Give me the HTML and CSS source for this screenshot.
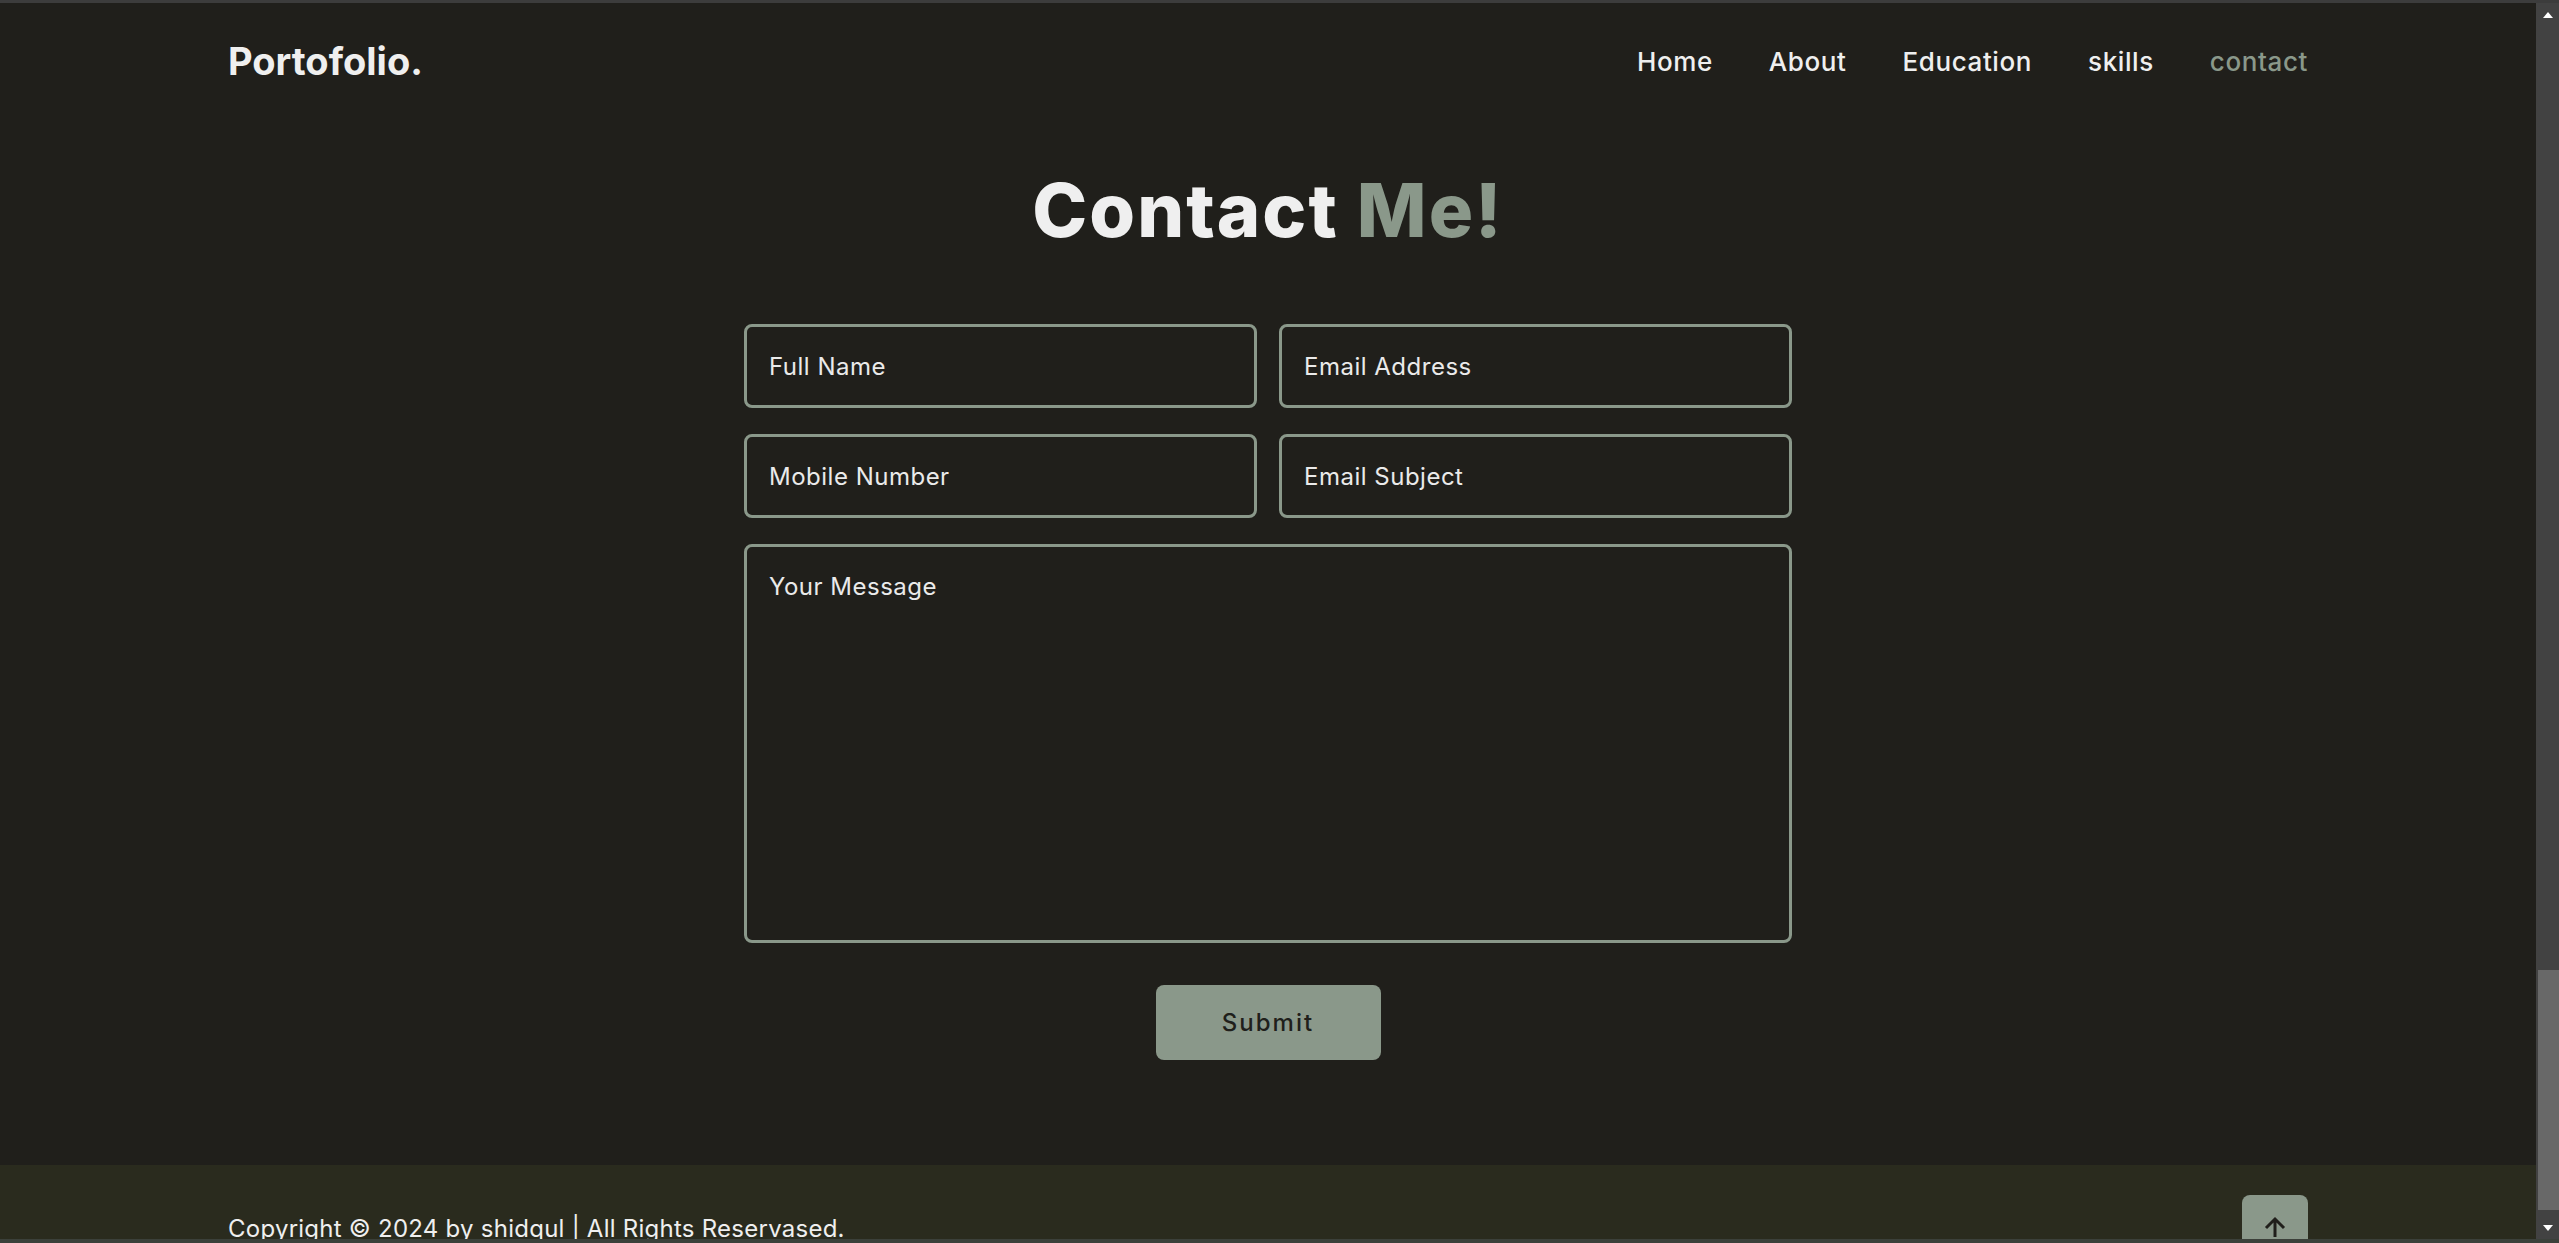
FILE: index.html
```html
<!DOCTYPE html>
<html lang="en">
<head>
<meta charset="utf-8">
<title>Portofolio - Contact</title>
<link rel="stylesheet" href="styles.css">
</head>
<body>
<div class="topline"></div>
<div class="window">
  <div class="page">
    <header class="header">
      <a class="logo" href="#">Portofolio.</a>
      <nav class="navbar">
        <a href="#">Home</a>
        <a href="#">About</a>
        <a href="#">Education</a>
        <a href="#">skills</a>
        <a href="#" class="active">contact</a>
      </nav>
    </header>

    <section class="contact">
      <h2 class="heading">Contact <span>Me!</span></h2>
      <form class="form" action="#">
        <div class="input-box">
          <input type="text" placeholder="Full Name">
          <input type="email" placeholder="Email Address">
        </div>
        <div class="input-box">
          <input type="number" placeholder="Mobile Number">
          <input type="text" placeholder="Email Subject">
        </div>
        <textarea placeholder="Your Message"></textarea>
        <button type="button" class="btn">Submit</button>
      </form>
    </section>

    <footer class="footer">
      <p class="footer-text">Copyright &copy; 2024 by shidqul | All Rights Reservased.</p>
      <a href="#" class="top-btn">
        <svg viewBox="0 0 24 24" width="36" height="36"><path d="M11 8.414V18h2V8.414l4.293 4.293 1.414-1.414L12 4.586l-6.707 6.707 1.414 1.414z" fill="#201f1b"/></svg>
      </a>
    </footer>
  </div>
  <div class="scrollbar">
    <div class="sb-arrow sb-up"></div>
    <div class="sb-track"><div class="sb-thumb"></div></div>
    <div class="sb-arrow sb-down"></div>
  </div>
</div>
<div class="bottomline"></div>
</body>
</html>
```
FILE: styles.css
```css
* { box-sizing: border-box; margin: 0; padding: 0; }

html, body {
  width: 2559px;
  height: 1243px;
  overflow: hidden;
}

body {
  background: #201f1b;
  font-family: "Inter", "Noto Sans", sans-serif;
  color: #ededed;
}

.topline { height: 3px; background: #3c3c3c; }
.bottomline { height: 4px; background: #3b403a; }

.window {
  display: flex;
  height: 1236px;
}

.page {
  flex: 1;
  display: flex;
  flex-direction: column;
  overflow: hidden;
}

.header {
  height: 116px;
  flex: none;
  padding: 0 228px 0 228px;
  display: flex;
  align-items: center;
  justify-content: space-between;
}

.logo {
  font-size: 38px;
  font-weight: 700;
  color: #efefef;
  text-decoration: none;
}

.navbar { display: flex; gap: 56px; }
.navbar a {
  font-size: 26px;
  font-weight: 500;
  letter-spacing: 0.6px;
  color: #efefef;
  text-decoration: none;
}
.navbar a.active { color: #8a988a; }

.contact {
  flex: none;
  padding-top: 47px;
  display: flex;
  flex-direction: column;
  align-items: center;
}

.heading {
  font-size: 74px;
  font-weight: 800;
  color: #efefef;
  letter-spacing: 2px;
  line-height: 88px;
  margin-bottom: 70px;
}
.heading span { color: #8a988a; }

.form {
  width: 1048px;
  display: flex;
  flex-direction: column;
  align-items: center;
}

.input-box {
  width: 100%;
  display: flex;
  gap: 22px;
  margin-bottom: 26px;
}

.form input, .form textarea {
  flex: 1;
  min-width: 0;
  height: 84px;
  background: transparent;
  border: 3px solid #8a988a;
  border-radius: 8px;
  padding: 0 22px;
  font-family: "Inter", "Noto Sans", sans-serif;
  font-size: 24px;
  letter-spacing: 0.5px;
  color: #efefef;
  outline: none;
}

.form input::placeholder, .form textarea::placeholder { color: #eaeaea; opacity: 1; }

.form input[type=number]::-webkit-inner-spin-button { display: none; }

.form textarea {
  width: 100%;
  flex: none;
  height: 399px;
  padding: 25px 22px;
  resize: none;
}

.btn {
  margin-top: 42px;
  width: 225px;
  height: 75px;
  border: none;
  border-radius: 8px;
  background: #8a988a;
  color: #201f1b;
  font-family: "Inter", "Noto Sans", sans-serif;
  font-size: 24px;
  font-weight: 500;
  letter-spacing: 2px;
}

.footer {
  margin-top: 105px;
  flex: none;
  background: #2a2b1e;
  padding: 30px 228px;
  display: flex;
  align-items: center;
  justify-content: space-between;
}

.footer-text { font-size: 24px; letter-spacing: 0.25px; color: #efefef; }

.top-btn {
  width: 66px;
  height: 66px;
  border-radius: 8px;
  background: #8a988a;
  display: flex;
  align-items: center;
  justify-content: center;
}

.scrollbar {
  width: 23px;
  flex: none;
  background: #424242;
  display: flex;
  flex-direction: column;
}
.sb-arrow { height: 23px; display: flex; justify-content: center; align-items: center; }
.sb-up::after {
  content: "";
  border-left: 5.5px solid transparent;
  border-right: 5.5px solid transparent;
  border-bottom: 6px solid #ffffff;
}
.sb-down::after {
  content: "";
  border-left: 5.5px solid transparent;
  border-right: 5.5px solid transparent;
  border-top: 6px solid #ffffff;
}
.sb-track { flex: 1; padding-left: 2px; display: flex; flex-direction: column; justify-content: flex-end; }
.sb-thumb { height: 240px; background: #686868; margin-bottom: 6px; }
```
